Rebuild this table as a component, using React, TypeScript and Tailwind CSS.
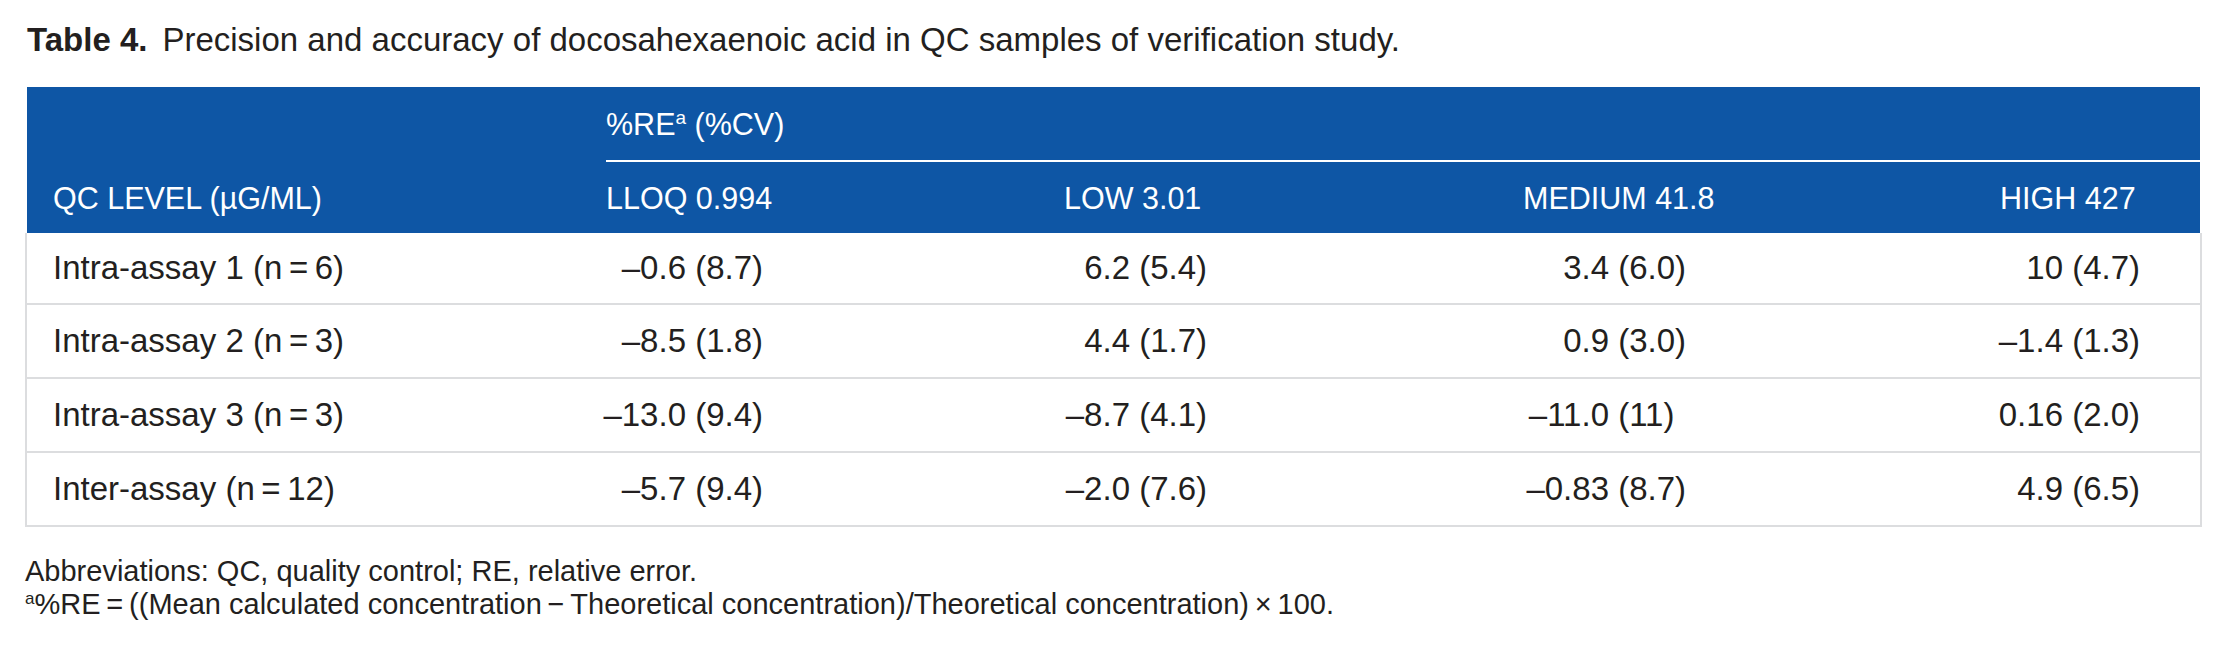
import React from "react";

type Cell = [string, string];
type Row = { label: React.ReactNode; h: string; cells: Cell[] };

const T = "\u2009";

const rows: Row[] = [
  {
    label: <>Intra-assay 1 (n{T}={T}6)</>,
    h: "h-[72px]",
    cells: [
      ["\u20130.6", "(8.7)"],
      ["6.2", "(5.4)"],
      ["3.4", "(6.0)"],
      ["10", "(4.7)"],
    ],
  },
  {
    label: <>Intra-assay 2 (n{T}={T}3)</>,
    h: "h-[74px]",
    cells: [
      ["\u20138.5", "(1.8)"],
      ["4.4", "(1.7)"],
      ["0.9", "(3.0)"],
      ["\u20131.4", "(1.3)"],
    ],
  },
  {
    label: <>Intra-assay 3 (n{T}={T}3)</>,
    h: "h-[74px]",
    cells: [
      ["\u201313.0", "(9.4)"],
      ["\u20138.7", "(4.1)"],
      ["\u201311.0", "(11)"],
      ["0.16", "(2.0)"],
    ],
  },
  {
    label: <>Inter-assay (n{T}={T}12)</>,
    h: "h-[74px]",
    cells: [
      ["\u20135.7", "(9.4)"],
      ["\u20132.0", "(7.6)"],
      ["\u20130.83", "(8.7)"],
      ["4.9", "(6.5)"],
    ],
  },
];

const firstWidths = ["w-[106px]", "w-[92px]", "w-[112px]", "w-[89px]"];

export default function App() {
  return (
    <div className="w-[2226px] h-[647px] bg-white text-[#231f20] overflow-hidden font-['Liberation_Sans',Arial,sans-serif]">
      <div className="pl-[27px] pt-[23px] text-[33px] leading-[33px] whitespace-nowrap">
        <span className="font-bold">Table 4.</span>
        <span className="ml-[15px]">
          Precision and accuracy of docosahexaenoic acid in QC samples of verification study.
        </span>
      </div>

      <div className="ml-[25px] mt-[31px] w-[2177px]">
        <div className="mx-[2px] bg-[#0e56a5] text-white text-[30.5px] leading-[34px]">
          <div className="flex h-[75px]">
            <div className="w-[579px] shrink-0" />
            <div className="flex-1 flex items-center border-b-2 border-white">
              <span>
                %RE<sup className="text-[19px] -top-[11px]">a</sup> (%CV)
              </span>
            </div>
          </div>
          <div className="grid grid-cols-[553px_458px_459px_477px_226px] h-[71px] items-center whitespace-nowrap">
            <div className="pl-[26px]">QC LEVEL (µG/ML)</div>
            <div className="pl-[26px]">LLOQ 0.994</div>
            <div className="pl-[26px]">LOW 3.01</div>
            <div className="pl-[26px]">MEDIUM 41.8</div>
            <div className="pl-[26px]">HIGH 427</div>
          </div>
        </div>

        <div className="border-x-2 border-[#dcdddf] text-[33px] leading-[36px]">
          {rows.map((r, i) => (
            <div
              key={i}
              className={`grid grid-cols-[553px_458px_459px_477px_226px] items-center border-b-2 border-[#dcdddf] whitespace-nowrap ${r.h}`}
            >
              <div className="pl-[26px]">{r.label}</div>
              {r.cells.map((c, j) => (
                <div key={j} className="flex">
                  <span className={`${firstWidths[j]} text-right shrink-0`}>{c[0]}</span>
                  <span>{"\u00a0" + c[1]}</span>
                </div>
              ))}
            </div>
          ))}
        </div>
      </div>

      <div className="pl-[25px] mt-[28px] text-[29px] leading-[33px] whitespace-nowrap">
        <div>Abbreviations: QC, quality control; RE, relative error.</div>
        <div>
          <sup className="text-[17px] -top-[10px]">a</sup>%RE{T}={T}((Mean calculated concentration{T}−{T}Theoretical
          concentration)/Theoretical concentration){T}×{T}100.
        </div>
      </div>
    </div>
  );
}
